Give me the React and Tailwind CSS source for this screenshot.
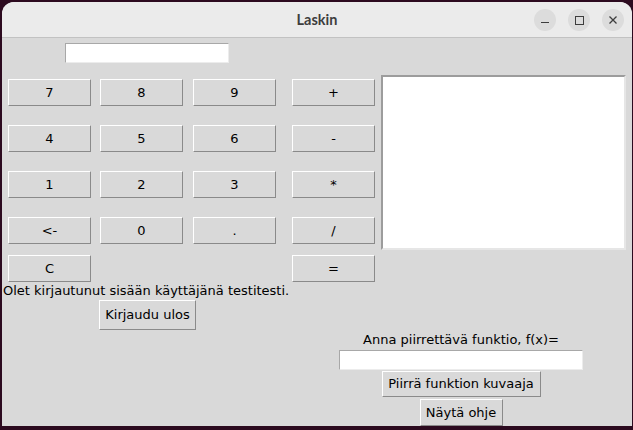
import React from "react";

const font = { fontFamily: '"DejaVu Sans", sans-serif' };

function TkButton({ children, className = "" }) {
  return (
    <div
      className={
        "flex items-center justify-center bg-[#d9d9d9] text-[13px] text-black border border-t-white border-l-white border-b-[#8a8a8a] border-r-[#8a8a8a] " +
        className
      }
    >
      {children}
    </div>
  );
}

function TkEntry({ className = "" }) {
  return (
    <div
      className={
        "bg-white border border-t-[#a8a8a8] border-l-[#a8a8a8] border-b-[#ececec] border-r-[#ececec] " +
        className
      }
    />
  );
}

export default function App() {
  const keys = [
    "7", "8", "9", "+",
    "4", "5", "6", "-",
    "1", "2", "3", "*",
    "<-", "0", ".", "/",
  ];

  return (
    <div className="w-[633px] h-[430px] bg-[#2c0a1f] pt-[2px] pl-[2px]" style={font}>
      <div className="w-[630px] h-[424px] rounded-t-[12px] overflow-hidden bg-[#d9d9d9] flex flex-col">
        {/* title bar */}
        <div className="relative h-[36px] shrink-0 bg-[#ebebeb] border-b border-[#c2c2c2] flex items-center justify-center">
          <span
            className="text-[14.5px] font-bold text-[#3d3d3d]"
            style={{ fontFamily: '"Lato", "DejaVu Sans", sans-serif' }}
          >
            Laskin
          </span>
          <div className="absolute right-[8px] top-[7px] flex gap-[12px]">
            <div className="w-[22px] h-[22px] rounded-full bg-[#dcdcdc] flex items-center justify-center">
              <div className="w-[8px] h-[1.5px] bg-[#3d3d3d] mt-[5px]" />
            </div>
            <div className="w-[22px] h-[22px] rounded-full bg-[#dcdcdc] flex items-center justify-center">
              <div className="w-[9px] h-[9px] border border-[#3d3d3d]" />
            </div>
            <div className="w-[22px] h-[22px] rounded-full bg-[#dcdcdc] flex items-center justify-center">
              <svg width="10" height="10" viewBox="0 0 10 10">
                <path d="M1.5 1.5 L8.5 8.5 M8.5 1.5 L1.5 8.5" stroke="#3d3d3d" strokeWidth="1.3" />
              </svg>
            </div>
          </div>
        </div>

        {/* body */}
        <div className="flex flex-col">
          <TkEntry className="mt-[5px] ml-[63px] w-[164px] h-[20px]" />

          <div className="flex mt-[12px]">
            <div className="pl-[6px] pt-[4px] grid grid-cols-[92px_93px_99px_89px] grid-rows-[46px_46px_46px_38px_27px]">
              {keys.map((k) => (
                <TkButton key={k} className="w-[83px] h-[27px]">
                  {k}
                </TkButton>
              ))}
              <TkButton className="w-[83px] h-[27px]">C</TkButton>
              <div />
              <div />
              <TkButton className="w-[83px] h-[27px]">=</TkButton>
            </div>
            <div className="w-[245px] h-[175px] bg-white border-t-2 border-l-2 border-t-[#9c9c9c] border-l-[#9c9c9c] border-b-2 border-r-2 border-b-[#e6e6e6] border-r-[#e6e6e6]" />
          </div>

          <div className="ml-[1px] h-[17px] leading-[17px] text-[13px] text-black">
            Olet kirjautunut sisään käyttäjänä testitesti.
          </div>
          <TkButton className="ml-[97px] mt-[1px] w-[97px] h-[30px]">Kirjaudu ulos</TkButton>

          <div className="ml-[337px] w-[244px] flex flex-col items-center">
            <div className="h-[20px] leading-[20px] text-[13px] text-black">
              Anna piirrettävä funktio, f(x)=
            </div>
            <TkEntry className="w-[244px] h-[20px]" />
            <TkButton className="mt-[1px] w-[159px] h-[26px]">Piirrä funktion kuvaaja</TkButton>
            <TkButton className="mt-[2px] w-[83px] h-[27px]">Näytä ohje</TkButton>
          </div>
        </div>
      </div>
    </div>
  );
}
